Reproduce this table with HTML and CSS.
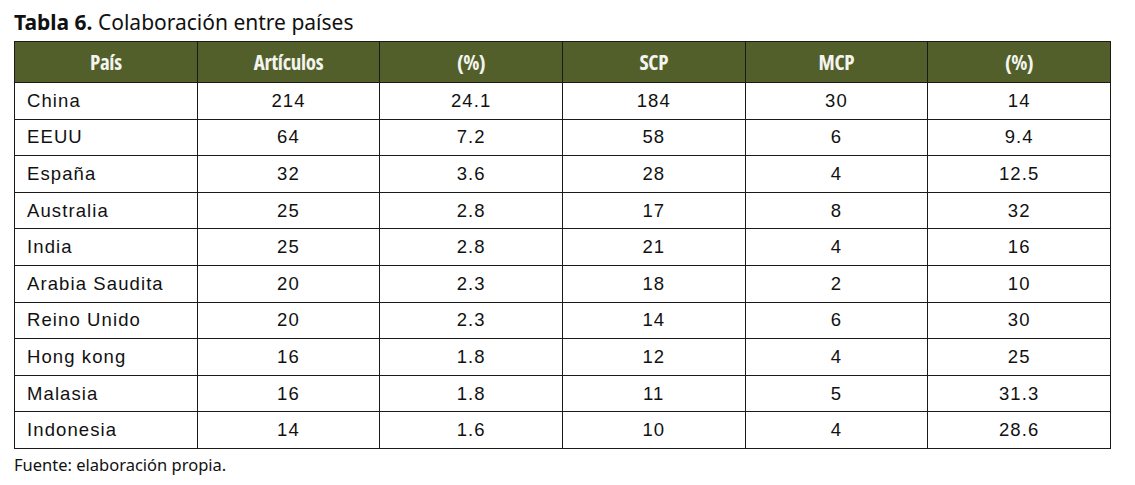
FILE: index.html
```html
<!DOCTYPE html>
<html lang="es">
<head>
<meta charset="utf-8">
<link rel="stylesheet" href="styles.css">
</head>
<body>
<div class="page">
  <p class="title"><b>Tabla 6.</b> Colaboración entre países</p>
  <table class="data">
    <thead>
      <tr><th>País</th><th>Artículos</th><th>(%)</th><th>SCP</th><th>MCP</th><th>(%)</th></tr>
    </thead>
    <tbody>
      <tr><td>China</td><td>214</td><td>24.1</td><td>184</td><td>30</td><td>14</td></tr>
      <tr><td>EEUU</td><td>64</td><td>7.2</td><td>58</td><td>6</td><td>9.4</td></tr>
      <tr><td>España</td><td>32</td><td>3.6</td><td>28</td><td>4</td><td>12.5</td></tr>
      <tr><td>Australia</td><td>25</td><td>2.8</td><td>17</td><td>8</td><td>32</td></tr>
      <tr><td>India</td><td>25</td><td>2.8</td><td>21</td><td>4</td><td>16</td></tr>
      <tr><td>Arabia Saudita</td><td>20</td><td>2.3</td><td>18</td><td>2</td><td>10</td></tr>
      <tr><td>Reino Unido</td><td>20</td><td>2.3</td><td>14</td><td>6</td><td>30</td></tr>
      <tr><td>Hong kong</td><td>16</td><td>1.8</td><td>12</td><td>4</td><td>25</td></tr>
      <tr><td>Malasia</td><td>16</td><td>1.8</td><td>11</td><td>5</td><td>31.3</td></tr>
      <tr><td>Indonesia</td><td>14</td><td>1.6</td><td>10</td><td>4</td><td>28.6</td></tr>
    </tbody>
  </table>
  <p class="source">Fuente: elaboración propia.</p>
</div>
</body>
</html>
```
FILE: styles.css
```css
html, body {
  margin: 0;
  padding: 0;
  background: #ffffff;
}
.page {
  padding: 10px 0 0 14px;
  width: 1097px;
}
.title {
  margin: 0 0 7px 0;
  font-family: "Noto Sans", "DejaVu Sans", sans-serif;
  font-size: 21px;
  line-height: 24px;
  color: #111;
}
.title b {
  font-weight: 700;
}
.data {
  width: 1097px;
  border-collapse: collapse;
  table-layout: fixed;
  font-family: "Liberation Sans", Arial, sans-serif;
  font-size: 18.5px;
  letter-spacing: 1.1px;
  color: #111;
}
.data th {
  background: #525f2a;
  color: #f4f4ee;
  font-family: "Open Sans", "DejaVu Sans Condensed", sans-serif;
  font-stretch: 75%;
  font-weight: 700;
  font-size: 21px;
  letter-spacing: -0.3px;
  height: 40px;
  padding: 0;
  border: 1.5px solid #1a1a1a;
  text-align: center;
}
.data td {
  height: 35.6px;
  padding: 0;
  border: 1.5px solid #1a1a1a;
  text-align: center;
}
.data td:first-child {
  text-align: left;
  padding-left: 12px;
}
.source {
  margin: 4px 0 0 0;
  font-family: "Noto Sans", "DejaVu Sans", sans-serif;
  font-size: 16.5px;
  font-stretch: 90%;
  color: #111;
}
```
